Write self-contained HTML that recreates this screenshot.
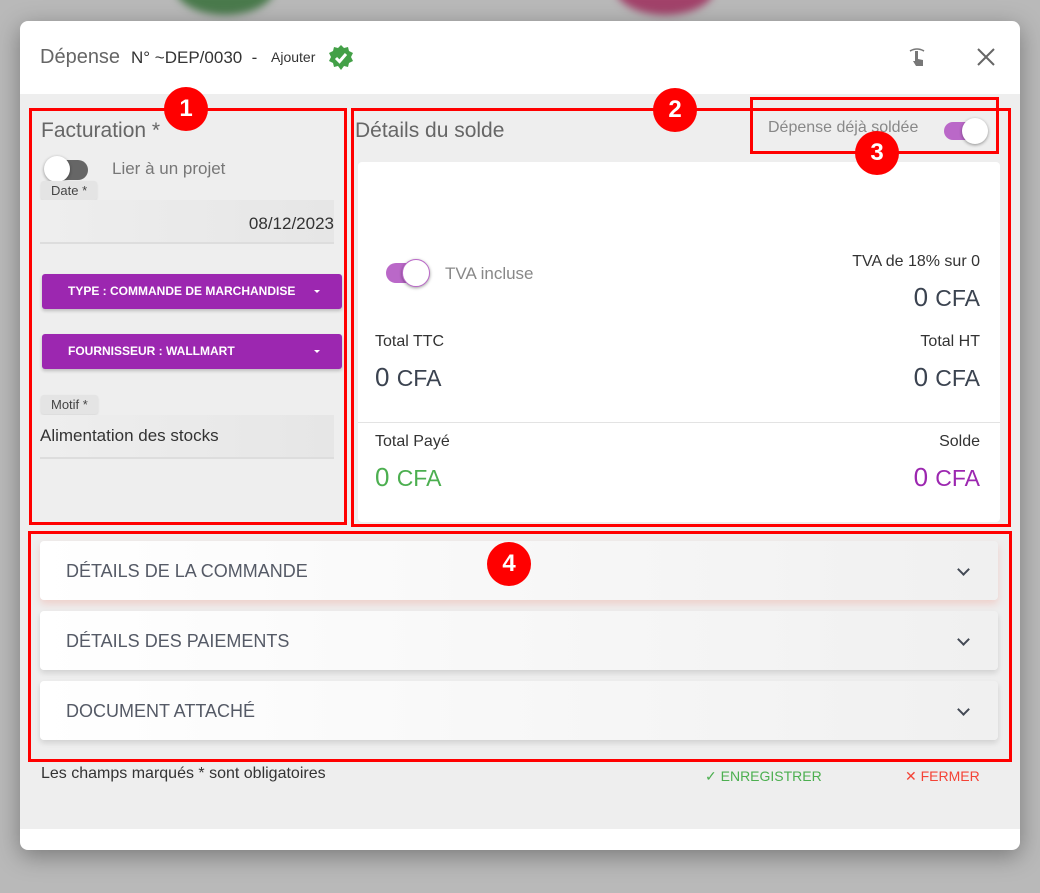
<!DOCTYPE html>
<html><head><meta charset="utf-8"><style>
*{box-sizing:border-box;margin:0;padding:0}
body{width:1040px;height:893px;overflow:hidden;background:#b9b9b9;font-family:"Liberation Sans",sans-serif;position:relative}
.a{position:absolute}
.modal{left:20px;top:21px;width:1000px;height:829px;background:#fff;border-radius:8px;overflow:hidden;box-shadow:0 6px 24px rgba(0,0,0,.35)}
.body{left:0;top:73px;width:1000px;height:735px;background:#eeeeee}
.red{border:3px solid #f00}
.badge{width:44px;height:44px;border-radius:50%;background:#f00;color:#fff;font:bold 24px "Liberation Sans",sans-serif;text-align:center;line-height:44px}
.btn{background:#9c27b0;color:#fff;font-weight:bold;font-size:12px;border-radius:3px;box-shadow:0 2px 3px rgba(0,0,0,.2);height:35px;line-height:35px;padding-left:26px}
.caret{position:absolute;right:22px;top:16px;border-left:3px solid transparent;border-right:3px solid transparent;border-top:3px solid #fff}
.acc{left:20px;width:958px;height:59px;background:linear-gradient(90deg,#fff,#f0f0f0);border-radius:4px;box-shadow:0 3px 6px rgba(0,0,0,.12);color:#555a66;font-size:18px;padding:20px 26px;font-family:"Liberation Sans Narrow","Liberation Sans",sans-serif}
.chev{position:absolute;right:30px;top:24px;width:9px;height:9px;border-right:2px solid #444a55;border-bottom:2px solid #444a55;transform:rotate(45deg)}
.lbl{background:#e4e4e4;border-radius:3px;font-size:13px;color:#444;padding:2px 10px;box-shadow:0 1px 2px rgba(0,0,0,.1)}
</style></head><body>
<div class="a" style="left:175px;top:-40px;width:100px;height:55px;border-radius:50%;background:#4a7a4c;filter:blur(4px)"></div>
<div class="a" style="left:615px;top:-40px;width:100px;height:55px;border-radius:50%;background:#a2426a;filter:blur(4px)"></div>
<div class="a modal">
 <div class="a" style="left:20px;top:25px;font-size:20px;color:#666">Dépense</div>
 <div class="a" style="left:111px;top:27px;font-size:17px;color:#333">N° ~DEP/0030 &nbsp;-</div>
 <div class="a" style="left:251px;top:28px;font-size:14px;color:#333">Ajouter</div>
 <svg class="a" style="left:307px;top:23px" width="28" height="28" viewBox="0 0 28 28"><polygon points="14,1 17,4 21,3 22,7 26,9 24,13 26,17 22,19 21,23 17,22 14,26 11,22 7,23 6,19 2,17 4,13 2,9 6,7 7,3 11,4" fill="#43a047"/><path d="M9 14l3.5 3.5L19 10" stroke="#fff" stroke-width="3" fill="none"/></svg>
 <svg class="a" style="left:886px;top:24px" width="22" height="24" viewBox="0 0 22 24"><path d="M4 6q7-4 14 0" stroke="#777" stroke-width="1.6" fill="none"/><path d="M9 6v10h-2l3 5h7v-6l-5-1v-8z" fill="#777"/></svg>
 <svg class="a" style="left:956px;top:26px" width="20" height="20"><path d="M2 2l16 16M18 2L2 18" stroke="#666" stroke-width="2"/></svg>
 <div class="a body">
  <div class="a" style="left:21px;top:25px;font-size:21px;color:#666">Facturation *</div>
  <div class="a" style="left:26px;top:66px;width:42px;height:20px;border-radius:10px;background:#666"></div>
  <div class="a" style="left:24px;top:62px;width:26px;height:26px;border-radius:50%;background:#fff;box-shadow:0 1px 3px rgba(0,0,0,.4)"></div>
  <div class="a" style="left:92px;top:65px;font-size:17px;color:#777">Lier à un projet</div>
  <div class="a lbl" style="left:21px;top:87px">Date *</div>
  <div class="a" style="left:20px;top:106px;width:294px;height:44px;background:linear-gradient(90deg,#eee,#e6e6e6);border-bottom:2px solid #ddd;font-size:17px;color:#333;text-align:right;padding-top:14px">08/12/2023</div>
  <div class="a btn" style="left:22px;top:180px;width:300px">TYPE : COMMANDE DE MARCHANDISE<div class="caret"></div></div>
  <div class="a btn" style="left:22px;top:240px;width:300px">FOURNISSEUR : WALLMART<div class="caret"></div></div>
  <div class="a lbl" style="left:21px;top:301px">Motif *</div>
  <div class="a" style="left:20px;top:321px;width:294px;height:44px;background:linear-gradient(90deg,#eee,#e6e6e6);border-bottom:2px solid #ddd;font-size:17px;color:#333;padding-top:11px">Alimentation des stocks</div>
  <div class="a" style="left:335px;top:25px;font-size:21px;color:#666">Détails du solde</div>
  <div class="a" style="left:748px;top:25px;font-size:16px;color:#888">Dépense déjà soldée</div>
  <div class="a" style="left:924px;top:28px;width:42px;height:18px;border-radius:9px;background:#ba68c8"></div>
  <div class="a" style="left:942px;top:24px;width:26px;height:26px;border-radius:50%;background:#fff;box-shadow:0 1px 3px rgba(0,0,0,.4)"></div>
  <div class="a" style="left:338px;top:68px;width:642px;height:360px;background:#fff;border-radius:4px">
   <div class="a" style="left:28px;top:101px;width:42px;height:20px;border-radius:10px;background:#ba68c8"></div>
   <div class="a" style="left:44px;top:97px;width:28px;height:28px;border-radius:50%;background:#fff;border:1px solid #ba68c8;box-shadow:0 1px 3px rgba(0,0,0,.4)"></div>
   <div class="a" style="left:87px;top:102px;font-size:17px;color:#888">TVA incluse</div>
   <div class="a" style="right:20px;top:91px;font-size:16px;color:#333">TVA de 18% sur 0</div>
   <div class="a" style="right:20px;top:120px;font-size:26px;color:#3b4350">0 <span style="font-size:23px">CFA</span></div>
   <div class="a" style="left:17px;top:171px;font-size:16px;color:#333">Total TTC</div>
   <div class="a" style="right:20px;top:171px;font-size:16px;color:#333">Total HT</div>
   <div class="a" style="left:17px;top:200px;font-size:26px;color:#3b4350">0 <span style="font-size:23px">CFA</span></div>
   <div class="a" style="right:20px;top:200px;font-size:26px;color:#3b4350">0 <span style="font-size:23px">CFA</span></div>
   <div class="a" style="left:0;top:260px;width:642px;height:1px;background:#e3e3e3"></div>
   <div class="a" style="left:17px;top:271px;font-size:16px;color:#333">Total Payé</div>
   <div class="a" style="right:20px;top:271px;font-size:16px;color:#333">Solde</div>
   <div class="a" style="left:17px;top:300px;font-size:26px;color:#4caf50">0 <span style="font-size:23px">CFA</span></div>
   <div class="a" style="right:20px;top:300px;font-size:26px;color:#9c27b0">0 <span style="font-size:23px">CFA</span></div>
  </div>
  <div class="a acc" style="top:447px;box-shadow:0 4px 8px rgba(244,120,100,.25)">DÉTAILS DE LA COMMANDE<div class="chev"></div></div>
  <div class="a acc" style="top:517px">DÉTAILS DES PAIEMENTS<div class="chev"></div></div>
  <div class="a acc" style="top:587px">DOCUMENT ATTACHÉ<div class="chev"></div></div>
  <div class="a" style="left:21px;top:671px;font-size:16px;color:#333">Les champs marqués * sont obligatoires</div>
  <div class="a" style="left:685px;top:674px;font-size:14px;color:#4caf50">✓ ENREGISTRER</div>
  <div class="a" style="left:885px;top:674px;font-size:14px;color:#f44336">✕ FERMER</div>
 </div>
</div>
<div class="a red" style="left:29px;top:108px;width:318px;height:417px"></div>
<div class="a red" style="left:351px;top:108px;width:660px;height:419px"></div>
<div class="a red" style="left:750px;top:97px;width:249px;height:57px"></div>
<div class="a red" style="left:28px;top:531px;width:984px;height:231px"></div>
<div class="a badge" style="left:164px;top:87px">1</div>
<div class="a badge" style="left:653px;top:88px">2</div>
<div class="a badge" style="left:855px;top:131px">3</div>
<div class="a badge" style="left:487px;top:542px">4</div>
</body></html>
